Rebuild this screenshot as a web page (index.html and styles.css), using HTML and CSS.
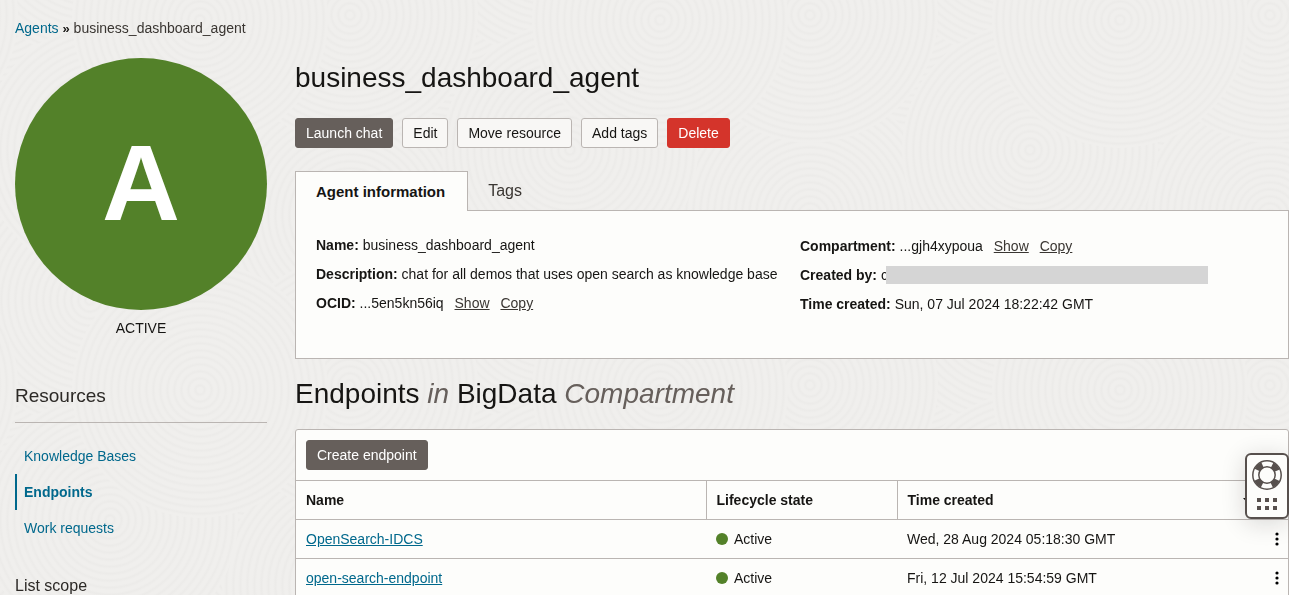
FILE: index.html
```html
<!DOCTYPE html>
<html lang="en">
<head>
<meta charset="utf-8">
<title>business_dashboard_agent</title>
<link rel="stylesheet" href="styles.css">
</head>
<body>
<svg class="texture" aria-hidden="true">
  <defs>
    <radialGradient id="ring" gradientUnits="userSpaceOnUse" cx="0" cy="0" r="7" spreadMethod="repeat">
      <stop offset="0" stop-color="#f0efed"/>
      <stop offset="0.35" stop-color="#f0efed"/>
      <stop offset="0.65" stop-color="#ecebe9"/>
      <stop offset="1" stop-color="#f0efed"/>
    </radialGradient>
    <circle id="disc" r="128" fill="url(#ring)"/>
    <pattern id="swirl" width="460" height="370" patternUnits="userSpaceOnUse">
      <use href="#disc" x="0" y="0"/><use href="#disc" x="460" y="0"/>
      <use href="#disc" x="0" y="370"/><use href="#disc" x="460" y="370"/>
      <use href="#disc" x="230" y="210"/>
      <use href="#disc" x="350" y="215"/><use href="#disc" x="-110" y="215"/>
      <use href="#disc" x="90" y="300"/><use href="#disc" x="90" y="-70"/>
      <use href="#disc" x="550" y="300"/><use href="#disc" x="550" y="-70"/>
      <use href="#disc" x="350" y="15"/><use href="#disc" x="350" y="385"/>
      <use href="#disc" x="-110" y="15"/><use href="#disc" x="-110" y="385"/>
      <use href="#disc" x="110" y="150"/><use href="#disc" x="570" y="150"/>
      <use href="#disc" x="200" y="390"/><use href="#disc" x="200" y="20"/>
    </pattern>
  </defs>
  <rect width="100%" height="100%" fill="url(#swirl)"/>
</svg>
<div class="page">
  <nav class="breadcrumb" aria-label="Breadcrumb"><a href="#agents">Agents</a> <span class="sep">»</span> <span>business_dashboard_agent</span></nav>
  <div class="columns">
    <aside class="sidebar">
      <div class="badge">A</div>
      <p class="status">ACTIVE</p>
      <h2 class="side-title">Resources</h2>
      <nav class="side-nav" aria-label="Resources">
        <a href="#kb">Knowledge Bases</a>
        <a class="current" href="#endpoints" aria-current="page">Endpoints</a>
        <a href="#work">Work requests</a>
      </nav>
      <h3 class="scope">List scope</h3>
    </aside>
    <main class="main">
      <h1 class="title">business_dashboard_agent</h1>
      <div class="actions">
        <button class="btn primary">Launch chat</button>
        <button class="btn">Edit</button>
        <button class="btn">Move resource</button>
        <button class="btn">Add tags</button>
        <button class="btn danger">Delete</button>
      </div>
      <div class="tabs" role="tablist">
        <button class="tab selected" role="tab" aria-selected="true">Agent information</button>
        <button class="tab" role="tab" aria-selected="false">Tags</button>
      </div>
      <section class="info">
        <div class="fields">
          <p><b>Name:</b> business_dashboard_agent</p>
          <p><b>Description:</b> chat for all demos that uses open search as knowledge base</p>
          <p><b>OCID:</b> ...5en5kn56iq <a href="#show">Show</a> <a href="#copy">Copy</a></p>
        </div>
        <div class="fields right">
          <p><b>Compartment:</b> ...gjh4xypoua <a href="#show">Show</a> <a href="#copy">Copy</a></p>
          <p class="created"><span><b>Created by:</b> c</span><span class="redacted"></span></p>
          <p><b>Time created:</b> Sun, 07 Jul 2024 18:22:42 GMT</p>
        </div>
      </section>
      <h2 class="title second">Endpoints <i>in</i> BigData <i>Compartment</i></h2>
      <section class="list">
        <div class="toolbar"><button class="btn primary">Create endpoint</button></div>
        <table class="table">
          <colgroup><col class="c-name"><col class="c-state"><col><col class="c-menu"></colgroup>
          <thead>
            <tr><th>Name</th><th>Lifecycle state</th><th colspan="2"><div class="sortable">Time created <svg width="9" height="5" viewBox="0 0 9 5"><path d="M0 0h9L4.500 5z" fill="#161513"/></svg></div></th></tr>
          </thead>
          <tbody>
            <tr><td><a href="#e1">OpenSearch-IDCS</a></td><td><span class="state">Active</span></td><td>Wed, 28 Aug 2024 05:18:30 GMT</td><td class="menu-cell"><button class="kebab" aria-label="Actions"><svg width="4" height="14" viewBox="0 0 4 14"><circle cx="2" cy="2" r="1.600"/><circle cx="2" cy="7" r="1.600"/><circle cx="2" cy="12" r="1.600"/></svg></button></td></tr>
            <tr><td><a href="#e2">open-search-endpoint</a></td><td><span class="state">Active</span></td><td>Fri, 12 Jul 2024 15:54:59 GMT</td><td class="menu-cell"><button class="kebab" aria-label="Actions"><svg width="4" height="14" viewBox="0 0 4 14"><circle cx="2" cy="2" r="1.600"/><circle cx="2" cy="7" r="1.600"/><circle cx="2" cy="12" r="1.600"/></svg></button></td></tr>
          </tbody>
        </table>
      </section>
    </main>
  </div>
</div>
<button class="help" aria-label="Help">
  <svg width="30" height="30" viewBox="0 0 30 30" fill="none" stroke="#57504d">
    <circle cx="15" cy="15" r="11" stroke-width="6" stroke-dasharray="7.400 9.879" stroke-dashoffset="-4.939"/>
    <circle cx="15" cy="15" r="14.200" stroke-width="1.500"/>
    <circle cx="15" cy="15" r="8.200" stroke-width="1.500"/>
  </svg>
  <svg width="20" height="12" viewBox="0 0 20 12" fill="#57504d"><path d="M0 0h4v4H0zM8 0h4v4H8zM16 0h4v4h-4zM0 8h4v4H0zM8 8h4v4H8zM16 8h4v4h-4z"/></svg>
</button>
</body>
</html>
```
FILE: styles.css
```css
* { box-sizing: border-box; }
body, h1, h2, h3, p { margin: 0; font-weight: 400; }
body {
  height: 100vh;
  overflow: hidden;
  background: #f0efed;
  color: #161513;
  font: 14px/20px "Liberation Sans", Arial, sans-serif;
}
a { color: #00688c; text-decoration: none; }
button { font: inherit; color: inherit; cursor: pointer; }

.texture { position: fixed; inset: 0; width: 100%; height: 100%; z-index: -1; }

.page { padding: 18px 0 0 15px; }
.breadcrumb { color: #3a3632; }
.sep { color: #161513; font-size: 13px; font-weight: 700; }

.columns { display: grid; grid-template-columns: 252px minmax(0, 1fr); gap: 28px; padding-top: 19px; }

.badge {
  display: flex;
  align-items: center;
  justify-content: center;
  aspect-ratio: 1;
  padding-bottom: 2px;
  border-radius: 50%;
  background: #538129;
  color: #fff;
  font-size: 108px;
  font-weight: 700;
}
.status { padding-top: 8px; text-align: center; }
.side-title {
  margin-top: 44px;
  padding-bottom: 12px;
  border-bottom: 1px solid #bab5b2;
  color: #2c2926;
  font-size: 19px;
  line-height: 28px;
}
.side-nav { display: flex; flex-direction: column; padding-top: 15px; }
.side-nav a { padding: 8px 0 8px 7px; border-left: 2px solid transparent; }
.side-nav .current { border-color: #00688c; font-weight: 700; }
.scope { margin-top: 30px; color: #2c2926; font-size: 16px; }

.title { font-size: 28px; line-height: 40px; }
.actions { display: flex; gap: 9px; padding-top: 20px; }
.btn {
  height: 30px;
  padding: 0 10px;
  border: 1px solid #bab5b2;
  border-radius: 3px;
  background: #f8f7f5;
}
.primary { border-color: #665f5b; background: #665f5b; color: #fff; }
.danger { border-color: #d4342b; background: #d4342b; color: #fff; }

.tabs { display: flex; margin-top: 23px; }
.tab { height: 39px; padding: 0 20px; border: 0; background: none; color: #3a3632; font-size: 16px; }
.tab.selected {
  height: 40px;
  margin-bottom: -1px;
  padding-right: 22px;
  border: 1px solid #bab5b2;
  border-bottom: 0;
  background: #fdfdfb;
  color: #161513;
  font-size: 15px;
  font-weight: 700;
  z-index: 1;
}
.info {
  display: grid;
  grid-template-columns: 1fr 1fr;
  min-height: 149px;
  padding: 24px 4px 36px 20px;
  border: 1px solid #bab5b2;
  background: #fdfdfb;
}
.fields { display: flex; flex-direction: column; gap: 9px; white-space: nowrap; }
.fields.right { padding-top: 1px; }
.fields a { margin-left: 7px; color: #3a3632; text-decoration: underline; text-underline-offset: 1px; }
.created { display: flex; align-items: center; }
.redacted { width: 322px; height: 18px; margin-left: -2px; background: #d5d5d5; }

.second { padding: 15px 0; }
.second i { color: #665f5b; }
.list { border: 1px solid #bab5b2; border-radius: 3px 3px 0 0; background: #fdfdfb; }
.toolbar { padding: 10px; }
.table { width: 100%; border-collapse: collapse; table-layout: fixed; }
.table th, .table td { height: 39px; padding: 0 10px; border-top: 1px solid #bab5b2; text-align: left; white-space: nowrap; }
.table th + th { border-left: 1px solid #bab5b2; }
.table a { text-decoration: underline; text-underline-offset: 1px; }
.c-name { width: 410px; }
.c-state { width: 191px; }
.c-menu { width: 32px; }
.sortable { display: flex; align-items: center; justify-content: space-between; padding-right: 26px; }
.state { display: flex; align-items: center; gap: 6px; }
.state::before { content: ""; width: 12px; height: 12px; border-radius: 50%; background: #538129; }
.table .menu-cell { text-align: right; padding-right: 9px; }
.kebab { display: flex; margin-left: auto; padding: 0; border: 0; background: none; }

.help {
  position: fixed;
  right: 0;
  top: 453px;
  display: flex;
  flex-direction: column;
  align-items: center;
  gap: 8px;
  width: 44px;
  height: 66px;
  padding: 5px 0;
  border: 2px solid #57504d;
  border-radius: 6px;
  background: #fdfdfb;
  box-shadow: 0 4px 24px rgba(22, 21, 19, 0.16);
}
```
